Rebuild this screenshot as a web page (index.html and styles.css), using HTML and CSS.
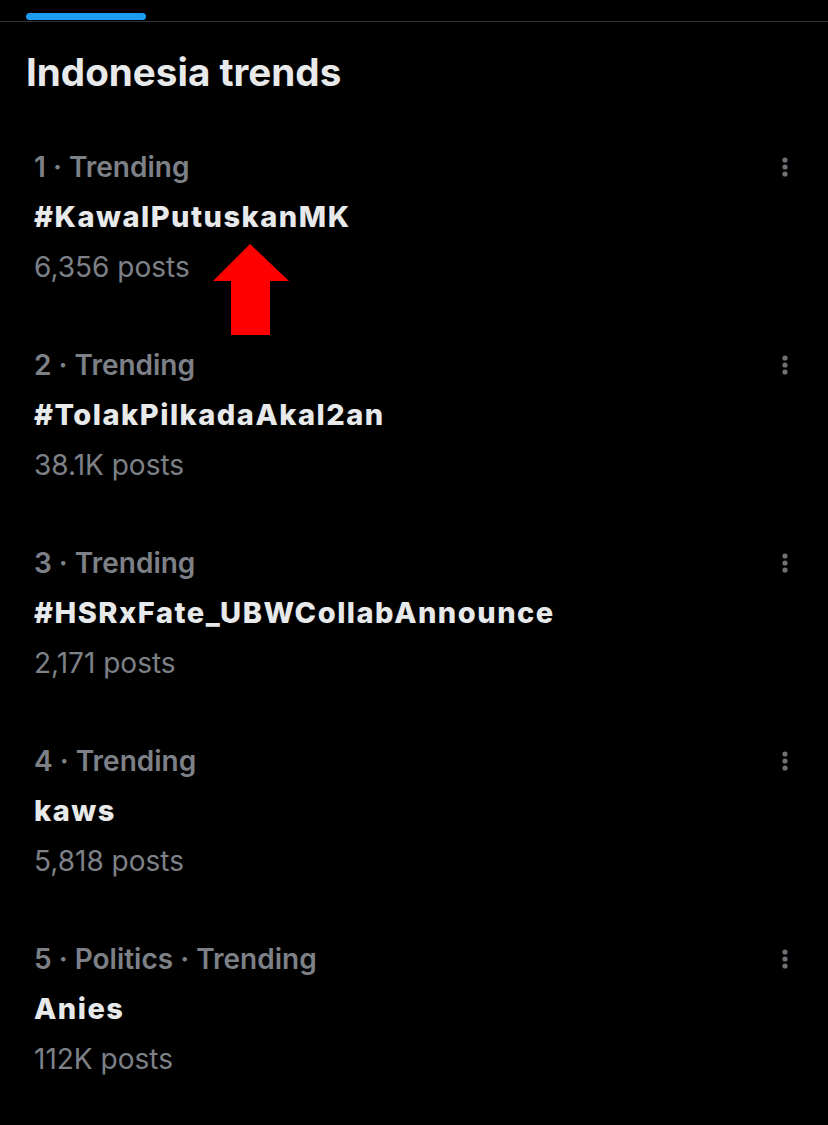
FILE: index.html
```html
<!DOCTYPE html>
<html lang="en">
<head>
<meta charset="utf-8">
<title>Indonesia trends</title>
<link rel="stylesheet" href="styles.css">
</head>
<body>
<div class="tabs"><div class="tab-indicator"></div></div>
<h1 class="heading">Indonesia trends</h1>
<ul class="trends">
  <li class="trend">
    <div class="trend-text">
      <div class="meta">1 · Trending</div>
      <div class="title">#KawalPutuskanMK</div>
      <div class="count">6,356 posts</div>
    </div>
    <svg class="more" viewBox="0 0 24 24" width="24" height="24"><circle cx="12" cy="5" r="2.6"/><circle cx="12" cy="12" r="2.6"/><circle cx="12" cy="19" r="2.6"/></svg>
    <svg class="arrow" viewBox="0 0 76 91" width="76" height="91"><polygon points="37,0 76,37 57,37 57,91 18,91 18,37 0,37"/></svg>
  </li>
  <li class="trend">
    <div class="trend-text">
      <div class="meta">2 · Trending</div>
      <div class="title">#TolakPilkadaAkal2an</div>
      <div class="count">38.1K posts</div>
    </div>
    <svg class="more" viewBox="0 0 24 24" width="24" height="24"><circle cx="12" cy="5" r="2.6"/><circle cx="12" cy="12" r="2.6"/><circle cx="12" cy="19" r="2.6"/></svg>
  </li>
  <li class="trend">
    <div class="trend-text">
      <div class="meta">3 · Trending</div>
      <div class="title">#HSRxFate_UBWCollabAnnounce</div>
      <div class="count">2,171 posts</div>
    </div>
    <svg class="more" viewBox="0 0 24 24" width="24" height="24"><circle cx="12" cy="5" r="2.6"/><circle cx="12" cy="12" r="2.6"/><circle cx="12" cy="19" r="2.6"/></svg>
  </li>
  <li class="trend">
    <div class="trend-text">
      <div class="meta">4 · Trending</div>
      <div class="title">kaws</div>
      <div class="count">5,818 posts</div>
    </div>
    <svg class="more" viewBox="0 0 24 24" width="24" height="24"><circle cx="12" cy="5" r="2.6"/><circle cx="12" cy="12" r="2.6"/><circle cx="12" cy="19" r="2.6"/></svg>
  </li>
  <li class="trend">
    <div class="trend-text">
      <div class="meta">5 · Politics · Trending</div>
      <div class="title">Anies</div>
      <div class="count">112K posts</div>
    </div>
    <svg class="more" viewBox="0 0 24 24" width="24" height="24"><circle cx="12" cy="5" r="2.6"/><circle cx="12" cy="12" r="2.6"/><circle cx="12" cy="19" r="2.6"/></svg>
  </li>
</ul>
</body>
</html>
```
FILE: styles.css
```css
html, body {
  margin: 0;
  padding: 0;
  background: #000;
}
body {
  font-family: Inter, Roboto, "Noto Sans", sans-serif;
  color: #e7e9ea;
  width: 828px;
  height: 1125px;
  overflow: hidden;
}
.tabs {
  height: 21px;
  border-bottom: 1px solid #2f3336;
  display: flex;
  align-items: flex-end;
}
.tab-indicator {
  margin-left: 26px;
  margin-bottom: 1px;
  width: 120px;
  height: 7px;
  border-radius: 4px;
  background: #1d9bf0;
}
.heading {
  margin: 26px 0 0 26px;
  font-size: 38.6px;
  line-height: 48px;
  font-weight: 700;
  color: #e7e9ea;
}
.trends {
  list-style: none;
  margin: 46px 0 0;
  padding: 0;
}
.trend {
  position: relative;
  display: flex;
  justify-content: space-between;
  align-items: flex-start;
  padding: 0 31px 48px 34px;
}
.trend-text {
  display: flex;
  flex-direction: column;
}
.meta, .title, .count {
  font-size: 28px;
  line-height: 50px;
}
.meta {
  color: #7d8187;
  font-weight: 600;
}
.title {
  font-size: 29px;
  font-weight: 800;
  letter-spacing: 1.5px;
  color: #e7e9ea;
}
.count {
  color: #7d8187;
}
.more {
  fill: #6e7276;
  margin-top: 13px;
}
.arrow {
  position: absolute;
  left: 213px;
  top: 102px;
  fill: #ff0000;
}
```
